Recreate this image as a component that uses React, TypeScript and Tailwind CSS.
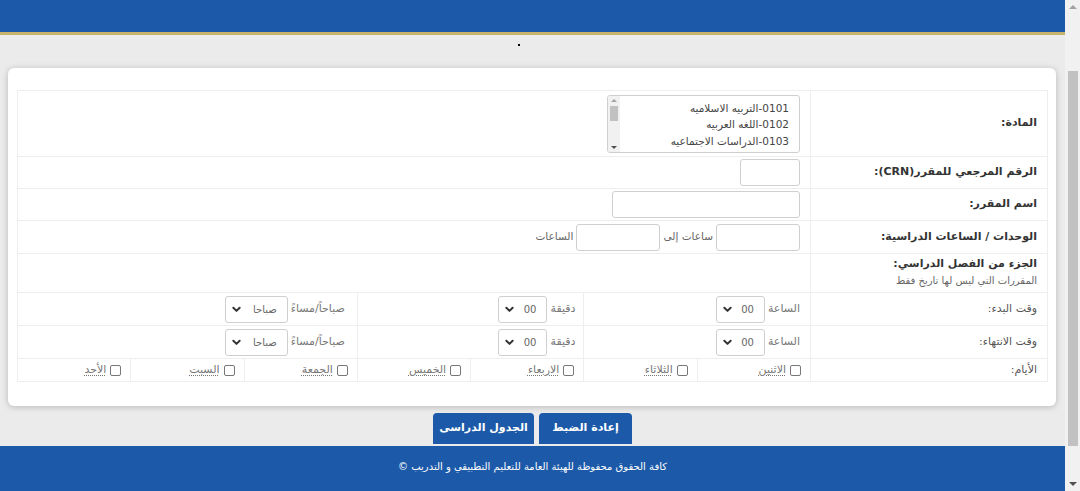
import React from "react";

const FONT = { fontFamily: '"DejaVu Sans", "Noto Sans", sans-serif' };

function Chevron() {
  return (
    <svg width="9" height="7" viewBox="0 0 10 7" className="shrink-0">
      <path d="M1.5 1.5 L5 5 L8.5 1.5" fill="none" stroke="#333" strokeWidth="2.2" strokeLinecap="round" strokeLinejoin="round" />
    </svg>
  );
}

function Sel({ value, wide }: { value: string; wide?: boolean }) {
  return (
    <div
      className={
        "flex items-center justify-between h-[27px] border border-[#cfcfcf] rounded-[3px] bg-white pr-[10px] pl-[6px] text-[10px] text-[#666] " +
        (wide ? "w-[63px]" : "w-[49px]")
      }
    >
      <span>{value}</span>
      <Chevron />
    </div>
  );
}

function Check() {
  return <span className="inline-block w-[11px] h-[11px] border border-[#777] rounded-[2px] bg-white shrink-0" />;
}

const days = ["الاثنين", "الثلاثاء", "الاربعاء", "الخميس", "الجمعة", "السبت", "الأحد"];

export default function App() {
  const td = "border border-[#eeeeee] align-middle";
  return (
    <div className="flex w-[1080px] h-[491px] overflow-hidden bg-[#ebebeb]" style={FONT}>
      <div className="flex-1 flex flex-col min-w-0">
        <div className="h-[32px] bg-[#1c5aa9] shrink-0" />
        <div className="h-[3px] bg-[#c8b36c] shrink-0" />
        <div className="relative h-[33px] shrink-0">
          <span className="absolute left-[518px] top-[9px] w-[2px] h-[2px] bg-black" />
        </div>
        <div className="ml-[8px] mr-[9px] bg-white rounded-[6px] shadow-[0_1px_6px_rgba(0,0,0,0.22)] pt-[22px] pb-[24px] pl-[9px] pr-[8px] shrink-0">
          <table dir="rtl" className="w-full table-fixed border-collapse text-[11px] text-[#333]">
            <colgroup>
              <col className="w-[237px]" />
              <col />
              <col />
              <col />
              <col />
              <col />
              <col />
              <col />
            </colgroup>
            <tbody>
              <tr className="h-[66px]">
                <td className={td + " pr-[10px] font-bold"}>المادة:</td>
                <td colSpan={7} className={td + " pr-[10px]"}>
                  <div className="flex w-[193px] h-[58px] border border-[#cfcfcf] rounded-[3px] bg-white overflow-hidden">
                    <div className="flex-1 flex flex-col pr-[10px] pt-[4px] text-[10.5px] leading-[16.5px] text-[#444]">
                      <div>0101-التربيه الاسلاميه</div>
                      <div>0102-اللغه العربيه</div>
                      <div>0103-الدراسات الاجتماعيه</div>
                    </div>
                    <div className="w-[12px] bg-[#f1f1f1] flex flex-col items-center py-[3px]">
                      <span className="w-0 h-0 border-l-[3px] border-r-[3px] border-b-[3px] border-l-transparent border-r-transparent border-b-[#a3a3a3]" />
                      <span className="mt-[4px] w-[8px] h-[15px] bg-[#c1c1c1]" />
                      <div className="flex-1" />
                      <span className="w-0 h-0 border-l-[3px] border-r-[3px] border-t-[3px] border-l-transparent border-r-transparent border-t-[#505050]" />
                    </div>
                  </div>
                </td>
              </tr>
              <tr className="h-[32px]">
                <td className={td + " pr-[10px] font-bold"}>الرقم المرجعي للمقرر(CRN):</td>
                <td colSpan={7} className={td + " pr-[10px]"}>
                  <div className="w-[60px] h-[27px] border border-[#cfcfcf] rounded-[3px] bg-white" />
                </td>
              </tr>
              <tr className="h-[32px]">
                <td className={td + " pr-[10px] font-bold"}>اسم المقرر:</td>
                <td colSpan={7} className={td + " pr-[10px]"}>
                  <div className="w-[188px] h-[27px] border border-[#cfcfcf] rounded-[3px] bg-white" />
                </td>
              </tr>
              <tr className="h-[33px]">
                <td className={td + " pr-[10px] font-bold"}>الوحدات / الساعات الدراسية:</td>
                <td colSpan={7} className={td + " pr-[10px]"}>
                  <div className="flex items-center gap-[3px] text-[#666]">
                    <div className="w-[84px] h-[27px] border border-[#cfcfcf] rounded-[3px] bg-white" />
                    <span className="text-[10.5px]">ساعات إلى</span>
                    <div className="w-[84px] h-[27px] border border-[#cfcfcf] rounded-[3px] bg-white" />
                    <span className="text-[10.5px]">الساعات</span>
                  </div>
                </td>
              </tr>
              <tr className="h-[39px]">
                <td className={td + " pr-[10px]"}>
                  <div className="font-bold leading-[16px]">الجزء من الفصل الدراسي:</div>
                  <div className="text-[10px] text-[#666] leading-[18px]">المقررات التي ليس لها تاريخ فقط</div>
                </td>
                <td colSpan={7} className={td} />
              </tr>
              {["وقت البدء:", "وقت الانتهاء:"].map((l) => (
                <tr key={l} className="h-[33px]">
                  <td className={td + " pr-[10px] text-[#555]"}>{l}</td>
                  <td colSpan={2} className={td + " pr-[10px]"}>
                    <div className="flex items-center gap-[3px] text-[#777]">
                      <span>الساعة</span>
                      <Sel value="00" />
                    </div>
                  </td>
                  <td colSpan={2} className={td + " pr-[8px]"}>
                    <div className="flex items-center gap-[3px] text-[#777]">
                      <span>دقيقة</span>
                      <Sel value="00" />
                    </div>
                  </td>
                  <td colSpan={3} className={td + " pr-[12px]"}>
                    <div className="flex items-center gap-[3px] text-[#777]">
                      <span>صباحاً/مساءً</span>
                      <Sel value="صباحا" wide />
                    </div>
                  </td>
                </tr>
              ))}
              <tr className="h-[23px]">
                <td className={td + " pr-[10px] text-[#555]"}>الأيام:</td>
                {days.map((d) => (
                  <td key={d} className={td + " pr-[9px]"}>
                    <div className="flex items-center gap-[4px]">
                      <Check />
                      <span className="text-[#777] underline decoration-dotted decoration-[#777] underline-offset-2">{d}</span>
                    </div>
                  </td>
                ))}
              </tr>
            </tbody>
          </table>
        </div>
        <div dir="rtl" className="flex justify-center gap-[5px] mt-[7px] shrink-0">
          <button className="h-[31px] w-[93px] bg-[#1c5aa9] text-white text-[11px] font-bold rounded-t-[4px]" style={FONT}>
            إعادة الضبط
          </button>
          <button className="h-[31px] w-[101px] bg-[#1c5aa9] text-white text-[11px] font-bold rounded-t-[4px] whitespace-nowrap" style={FONT}>
            الجدول الدراسى
          </button>
        </div>
        <div dir="rtl" className="mt-[2px] flex-1 bg-[#1c5aa9] text-white text-[10px] text-center pt-[13px]">
          كافة الحقوق محفوظة للهيئة العامة للتعليم التطبيقي و التدريب ©
        </div>
      </div>
      <div className="w-[15px] bg-[#f1f1f1] flex flex-col items-center shrink-0">
        <span className="mt-[5px] w-0 h-0 border-l-[4px] border-r-[4px] border-b-[4px] border-l-transparent border-r-transparent border-b-[#a3a3a3]" />
        <span className="mt-[62px] w-[10px] h-[375px] bg-[#c1c1c1]" />
        <div className="flex-1" />
        <span className="mb-[5px] w-0 h-0 border-l-[4px] border-r-[4px] border-t-[4px] border-l-transparent border-r-transparent border-t-[#505050]" />
      </div>
    </div>
  );
}
